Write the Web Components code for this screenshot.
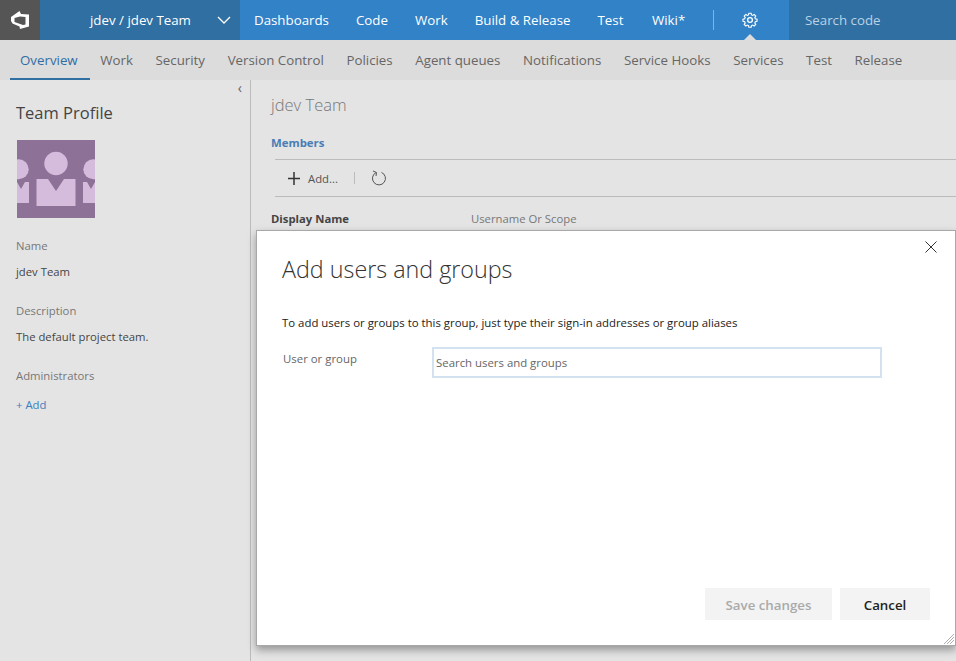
<!DOCTYPE html>
<html>
<head>
<meta charset="utf-8">
<title>jdev Team</title>
<style>
    html, body { margin: 0; height: 100%; overflow: hidden; }
    body {
        display: flex;
        flex-direction: column;
        height: 661px;
        position: relative;
        background: #e4e4e4;
        font-family: "Open Sans", "Noto Sans", sans-serif;
    }
</style>
</head>
<body>
<top-bar></top-bar>
<sub-nav></sub-nav>
<page-body>
    <team-profile slot="side"></team-profile>
    <team-members slot="main"></team-members>
</page-body>
<add-dialog></add-dialog>

<script>
class TopBar extends HTMLElement {
    connectedCallback() {
        this.attachShadow({ mode: 'open' });
        this.shadowRoot.innerHTML = `
            <style>
                :host { display: flex; height: 40px; background: #3282c8; color: #fff; font-size: 13.3px; flex: none; white-space: nowrap; }
                .logo { width: 40px; flex: none; background: #555; display: flex; align-items: center; justify-content: center; }
                .project { width: 200px; flex: none; background: #306fa2; display: flex; align-items: center; box-sizing: border-box; padding-left: 50px; position: relative; }
                .project svg { position: absolute; left: 177px; top: 16px; }
                nav { flex: 1; display: flex; align-items: center; padding-left: .5px; position: relative; }
                nav a { padding: 0 13.5px; flex: none; }
                nav a:last-of-type { margin-left: 1.5px; }
                .sep { width: 1px; height: 20px; background: rgba(255,255,255,.4); margin-left: 14px; flex: none; }
                .gear { width: 16px; height: 16px; }
                .gear-box { position: relative; height: 40px; width: 72px; flex: none; display: flex; align-items: center; justify-content: center; }
                .gear-box::after { content: ""; position: absolute; bottom: 0; left: 50%; margin-left: -6px; border: 6px solid transparent; border-top: 0; border-bottom-color: #dcdcdc; }
                .search { width: 167px; flex: none; background: #306fa2; display: flex; align-items: center; box-sizing: border-box; padding-left: 16px; color: #b9d2e6; }
            </style>
            <div class="logo">
                <svg width="20" height="20" viewBox="0 0 20 20">
                    <path fill="#fff" fill-rule="evenodd" d="M1 7 L9.5 1 L11 4 L19 4.5 L19 16.5 L10 19 L9.5 16.5 L2.5 13.5 L1 11 Z M4.5 8 L4.5 12 L13 15 L15.5 14.5 L15.5 7 L10 6.5 Z"/>
                </svg>
            </div>
            <div class="project">jdev / jdev Team
                <svg width="14" height="8" viewBox="0 0 14 8"><path d="M1 1 L7 7 L13 1" fill="none" stroke="#fff" stroke-width="1.3"/></svg>
            </div>
            <nav>
                <a>Dashboards</a><a>Code</a><a>Work</a><a>Build &amp; Release</a><a>Test</a><a>Wiki*</a>
                <span class="sep"></span>
                <span class="gear-box">
                    <svg class="gear" viewBox="0 0 24 24" fill="none" stroke="#fff" stroke-width="2">
                        <circle cx="12" cy="12" r="3.6"/>
                        <path d="M10 1.5h4l.7 3 2 .9 2.6-1.7 2.9 2.9-1.7 2.6.9 2 3 .7v4l-3 .7-.9 2 1.7 2.6-2.9 2.9-2.6-1.7-2 .9-.7 3h-4l-.7-3-2-.9-2.6 1.7-2.9-2.9 1.7-2.6-.9-2-3-.7v-4l3-.7.9-2-1.7-2.6 2.9-2.9 2.6 1.7 2-.9z" transform="translate(12 12) scale(.85) translate(-12 -13.5)"/>
                    </svg>
                </span>
            </nav>
            <div class="search">Search code</div>
        `;
    }
}

class SubNav extends HTMLElement {
    connectedCallback() {
        this.attachShadow({ mode: 'open' });
        const tabs = ['Overview', 'Work', 'Security', 'Version Control', 'Policies', 'Agent queues', 'Notifications', 'Service Hooks', 'Services', 'Test', 'Release'];
        this.shadowRoot.innerHTML = `
            <style>
                :host { display: flex; height: 40px; background: #dcdcdc; font-size: 13.3px; color: #666; padding-left: 10px; flex: none; white-space: nowrap; }
                a { padding: 0 12.6px 0 10px; display: flex; align-items: center; box-sizing: border-box; height: 40px; }
                a.active { color: #2f6ea5; border-bottom: 2px solid #306fa2; padding-top: 2px; }
            </style>
            ${tabs.map((t, i) => `<a class="${i == 0 ? 'active' : ''}">${t}</a>`).join('')}
        `;
    }
}

class PageBody extends HTMLElement {
    connectedCallback() {
        this.attachShadow({ mode: 'open' });
        this.shadowRoot.innerHTML = `
            <style>
                :host { display: flex; flex: 1; min-height: 0; }
                .side { width: 250px; border-right: 1px solid #bbb; flex: none; position: relative; }
                .side::before { content: "‹"; position: absolute; top: 0; right: 8px; font-size: 14px; color: #666; line-height: 16px; }
                .main { flex: 1; min-width: 0; }
            </style>
            <div class="side"><slot name="side"></slot></div>
            <div class="main"><slot name="main"></slot></div>
        `;
    }
}

class TeamProfile extends HTMLElement {
    connectedCallback() {
        this.attachShadow({ mode: 'open' });
        this.shadowRoot.innerHTML = `
            <style>
                :host { display: block; padding: 20px 16px 0; font-size: 11.3px; color: #444; }
                h2 { margin: 0; font-weight: 400; font-size: 16.5px; line-height: 26px; color: #444; }
                svg { display: block; margin: 14px 0 0 1px; }
                dt { color: #777; line-height: 16px; margin-top: 20px; }
                dd { margin: 10px 0 0; line-height: 16px; }
                dl { margin: 8px 0 0; }
                a { color: #3a7fc0; display: block; margin-top: 13px; line-height: 16px; }
            </style>
            <h2>Team Profile</h2>
            <svg width="78" height="78" viewBox="0 0 78 78">
                <rect width="78" height="78" fill="#8d7196"/>
                <g fill="#d5bcdd">
                    <circle cx="39" cy="23.5" r="11.7"/>
                    <path d="M19.5 39 H31 L39 51 L47 39 H58.5 V66 H19.5 Z"/>
                    <circle cx="1.7" cy="29.3" r="10"/>
                    <path d="M0 42 L4 49 L8 42 H12 V63 H0 Z"/>
                    <circle cx="76.3" cy="29.3" r="10"/>
                    <path d="M78 42 L74 49 L70 42 H66 V63 H78 Z"/>
                </g>
            </svg>
            <dl>
                <dt>Name</dt><dd>jdev Team</dd>
                <dt style="margin-top:23px">Description</dt><dd>The default project team.</dd>
                <dt style="margin-top:23px">Administrators</dt>
            </dl>
            <a>+ Add</a>
        `;
    }
}

class TeamMembers extends HTMLElement {
    connectedCallback() {
        this.attachShadow({ mode: 'open' });
        this.shadowRoot.innerHTML = `
            <style>
                :host { display: block; padding: 13px 0 0 20px; font-size: 11.3px; color: #555; }
                h1 { margin: 0; font-size: 16.5px; font-weight: 300; color: #777; line-height: 24px; }
                h3 { margin: 18px 0 0; font-size: 11.4px; font-weight: 700; color: #4a7db5; line-height: 16px; }
                .bar { margin: 8px 0 0 4px; height: 36px; border-top: 1px solid #bbb; border-bottom: 1px solid #bbb; display: flex; align-items: center; padding-left: 13px; }
                .bar svg { flex: none; }
                .bar span { margin-left: 8px; }
                .bar i { width: 1px; height: 12px; background: #bbb; margin: 0 16px; }
                .cols { display: flex; line-height: 16px; margin-top: 14px; }
                .cols b { width: 200px; color: #444; }
                .cols span { color: #777; }
            </style>
            <h1>jdev Team</h1>
            <h3>Members</h3>
            <div class="bar">
                <svg width="12" height="13" viewBox="0 0 12 13"><path d="M6 0v13M0 6.5h12" stroke="#333" stroke-width="1.5"/></svg>
                <span>Add...</span>
                <i></i>
                <svg width="16" height="16" viewBox="0 0 16 16" fill="none" stroke="#555" stroke-width="1"><path d="M5 2.6A6.5 6.5 0 1 0 10.5 2.4"/><path d="M2 1 L5.5 2.5 L5 6"/></svg>
            </div>
            <div class="cols"><b>Display Name</b><span>Username Or Scope</span></div>
        `;
    }
}

class AddDialog extends HTMLElement {
    connectedCallback() {
        this.attachShadow({ mode: 'open' });
        this.shadowRoot.innerHTML = `
            <style>
                :host {
                    position: absolute; left: 256px; top: 230px;
                    background: #fff; border: 1px solid #a8a8a8; box-shadow: 0 4px 8px rgba(0,0,0,.35);
                    display: flex; flex-direction: column; padding: 0 25px 25px;
                    width: 648px; height: 389px; font-size: 11.4px; color: #333;
                }
                .close { position: absolute; right: 18px; top: 10px; }
                h1 { margin: 19px 0 0; font-size: 23.3px; font-weight: 300; line-height: 38px; color: #333; }
                p { margin: 27px 0 0; line-height: 16px; color: #222; }
                .row { display: flex; margin-top: 16px; }
                label { width: 150px; flex: none; color: #666; line-height: 16px; padding: 4px 0 0 1px; box-sizing: border-box; }
                .input { width: 450px; flex: none; height: 31px; box-sizing: border-box; border: 2px solid #d3e2f1; padding-left: 2px; display: flex; align-items: center; color: #666; }
                .foot { margin-top: auto; display: flex; justify-content: flex-end; gap: 8px; font-size: 13.3px; font-weight: 600; }
                button { font: inherit; border: 0; height: 32px; background: #f3f3f3; padding: 1px 0 0; }
                .save { width: 127px; color: #aaa; }
                .cancel { width: 90px; color: #222; }
                .grip { position: absolute; right: 1px; bottom: 1px; }
            </style>
            <svg class="close" width="12" height="12" viewBox="0 0 12 12"><path d="M0.5 0.5L11.5 11.5M11.5 0.5L0.5 11.5" stroke="#333"/></svg>
            <h1>Add users and groups</h1>
            <p>To add users or groups to this group, just type their sign-in addresses or group aliases</p>
            <div class="row">
                <label>User or group</label>
                <div class="input">Search users and groups</div>
            </div>
            <div class="foot">
                <button class="save">Save changes</button>
                <button class="cancel">Cancel</button>
            </div>
            <svg class="grip" width="10" height="10" viewBox="0 0 10 10" stroke="#999" stroke-width=".8"><path d="M0 10L10 0M3 10L10 3M6 10L10 6"/></svg>
        `;
    }
}

customElements.define('top-bar', TopBar);
customElements.define('sub-nav', SubNav);
customElements.define('page-body', PageBody);
customElements.define('team-profile', TeamProfile);
customElements.define('team-members', TeamMembers);
customElements.define('add-dialog', AddDialog);
</script>
</body>
</html>
